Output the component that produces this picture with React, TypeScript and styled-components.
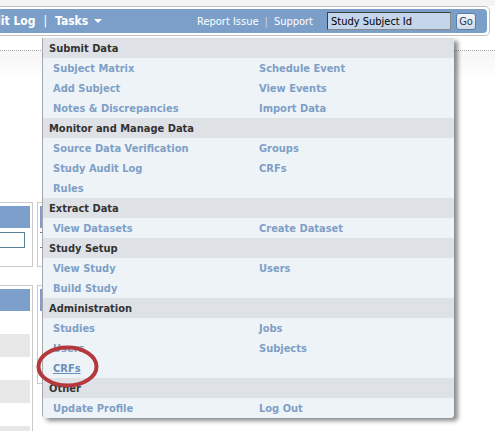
import React from 'react'
import styled, { createGlobalStyle } from 'styled-components'

const GlobalStyle = createGlobalStyle`
  html, body {
    margin: 0;
    padding: 0;
    background: #ffffff;
    overflow: hidden;
  }
  body {
    font-family: "DejaVu Sans Condensed", "DejaVu Sans", sans-serif;
    font-stretch: condensed;
  }
`

const Page = styled.div`
  position: relative;
  width: 495px;
  height: 431px;
  overflow: hidden;
`

const TopStrip = styled.div`
  height: 6px;
  background: #f3f3f3;
`

const NavFrame = styled.div`
  width: 487px;
  border: 1px solid #c2c2c2;
  border-left: none;
  border-radius: 0 5px 5px 0;
  padding: 2px 2px 2px 0;
  background: #ffffff;
`

const NavBar = styled.nav`
  display: flex;
  align-items: center;
  height: 24px;
  background: #7b9fc9;
  border-radius: 0 4px 4px 0;
  color: #ffffff;
  font-size: 12px;
`

const NavLeft = styled.div`
  display: flex;
  align-items: center;
  margin-left: -23px;
  font-weight: bold;
  white-space: nowrap;
`

const Sep = styled.span<{ $light?: boolean }>`
  margin: 0 ${p => (p.$light ? 6 : 8)}px;
  color: ${p => (p.$light ? '#c9d8ea' : '#ffffff')};
  font-weight: normal;
`

const Caret = styled.span`
  display: inline-block;
  margin-left: 6px;
  width: 0;
  height: 0;
  border-left: 4px solid transparent;
  border-right: 4px solid transparent;
  border-top: 4px solid #ffffff;
`

const NavRight = styled.div`
  display: flex;
  align-items: center;
  margin-left: auto;
  font-size: 11px;
  white-space: nowrap;
`

const SearchInput = styled.input`
  box-sizing: border-box;
  width: 124px;
  height: 18px;
  margin-left: 14px;
  padding: 0 3px;
  border: 1px solid #3f3f3f;
  border-right-color: #8a8a8a;
  border-bottom-color: #8a8a8a;
  background: #c3d5ea;
  color: #000000;
  font-family: inherit;
  font-stretch: condensed;
  font-size: 11px;
  outline: none;
`

const GoButton = styled.button`
  box-sizing: border-box;
  width: 20px;
  height: 17px;
  margin: 0 11px 0 5px;
  padding: 0;
  border: 1px solid #5b7ea8;
  border-radius: 3px;
  background: linear-gradient(#f3f6f9, #cfdae6);
  color: #1d3a62;
  font-family: inherit;
  font-stretch: condensed;
  font-size: 11px;
`

const SubHeader = styled.div`
  height: 14px;
  border-bottom: 1px dotted #a8a8a8;
`

const Band = styled.div`
  height: 24px;
  background: linear-gradient(#f6f6f6, #fdfdfd);
`

const Content = styled.div`
  display: flex;
  gap: 4px;
  padding-top: 127px;
`

const Column = styled.div<{ $width: number }>`
  display: flex;
  flex-direction: column;
  gap: 18px;
  flex: 0 0 ${p => p.$width}px;
`

const Panel = styled.section<{ $open?: boolean }>`
  box-sizing: border-box;
  border: 1px solid #cacaca;
  border-left: ${p => (p.$open ? 'none' : '1px solid #cacaca')};
  padding: 3px 2px 3px ${p => (p.$open ? 0 : 2)}px;
`

const PanelHead = styled.div`
  height: 22px;
  background: #7ca0cb;
`

const PanelInput = styled.div`
  width: 25px;
  height: 16px;
  margin: 4px 0 15px;
  box-sizing: border-box;
  border: 1px solid #5a8396;
  border-left: none;
`

const PanelRow = styled.div<{ $shade?: boolean }>`
  height: 23px;
  background: ${p => (p.$shade ? '#e7e7e7' : 'transparent')};
`

const Menu = styled.div`
  position: absolute;
  left: 42px;
  top: 38px;
  width: 411px;
  border-left: 1px solid #a7a7a7;
  border-radius: 0 0 4px 4px;
  overflow: hidden;
  box-shadow: 4px 3px 4px rgba(0, 0, 0, 0.45);
  font-size: 11px;
  font-weight: bold;
`

const MenuHead = styled.div`
  box-sizing: border-box;
  height: 20px;
  line-height: 20px;
  padding: 1px 0 0 6px;
  background: #dee2e6;
  color: #333333;
`

const MenuRow = styled.div`
  box-sizing: border-box;
  display: grid;
  grid-template-columns: 206px 1fr;
  height: 20px;
  line-height: 20px;
  padding: 1px 0 0 10px;
  background: #eef3f8;
`

const MenuLink = styled.a<{ $hover?: boolean }>`
  color: ${p => (p.$hover ? '#6a8ebd' : '#7f9fc6')};
  text-decoration: ${p => (p.$hover ? 'underline' : 'none')};
  white-space: nowrap;
`

const Mark = styled.svg`
  position: absolute;
  left: 36px;
  top: 345px;
  pointer-events: none;
`

const sections: { title: string; rows: [string, string][] }[] = [
  {
    title: 'Submit Data',
    rows: [
      ['Subject Matrix', 'Schedule Event'],
      ['Add Subject', 'View Events'],
      ['Notes & Discrepancies', 'Import Data'],
    ],
  },
  {
    title: 'Monitor and Manage Data',
    rows: [
      ['Source Data Verification', 'Groups'],
      ['Study Audit Log', 'CRFs'],
      ['Rules', ''],
    ],
  },
  { title: 'Extract Data', rows: [['View Datasets', 'Create Dataset']] },
  {
    title: 'Study Setup',
    rows: [
      ['View Study', 'Users'],
      ['Build Study', ''],
    ],
  },
  {
    title: 'Administration',
    rows: [
      ['Studies', 'Jobs'],
      ['Users', 'Subjects'],
      ['CRFs', ''],
    ],
  },
  { title: 'Other', rows: [['Update Profile', 'Log Out']] },
]

export default function App() {
  return (
    <Page>
      <GlobalStyle />
      <TopStrip />
      <NavFrame>
        <NavBar>
          <NavLeft>
            <span>Audit Log</span>
            <Sep>|</Sep>
            <span>Tasks</span>
            <Caret />
          </NavLeft>
          <NavRight>
            <span>Report Issue</span>
            <Sep $light>|</Sep>
            <span>Support</span>
            <SearchInput defaultValue="Study Subject Id" />
            <GoButton>Go</GoButton>
          </NavRight>
        </NavBar>
      </NavFrame>
      <SubHeader />
      <Band />
      <Content>
        <Column $width={33}>
          <Panel $open>
            <PanelHead />
            <PanelInput />
          </Panel>
          <Panel $open>
            <PanelHead />
            <PanelRow />
            <PanelRow $shade />
            <PanelRow />
            <PanelRow $shade />
            <PanelRow />
            <PanelRow $shade />
          </Panel>
        </Column>
        <Column $width={410}>
          <Panel>
            <PanelHead />
            <PanelInput />
          </Panel>
          <Panel>
            <PanelHead />
            <PanelRow />
            <PanelRow />
            <PanelRow />
          </Panel>
        </Column>
      </Content>
      <Menu>
        {sections.map(s => (
          <React.Fragment key={s.title}>
            <MenuHead>{s.title}</MenuHead>
            {s.rows.map(([a, b]) => (
              <MenuRow key={a}>
                <MenuLink href="#" $hover={s.title === 'Administration' && a === 'CRFs'}>
                  {a}
                </MenuLink>
                <MenuLink href="#">{b}</MenuLink>
              </MenuRow>
            ))}
          </React.Fragment>
        ))}
      </Menu>
      <Mark width="64" height="44" viewBox="0 0 64 44">
        <ellipse cx="31.5" cy="21.5" rx="29" ry="19" fill="none" stroke="#b5383c" strokeWidth="4" />
      </Mark>
    </Page>
  )
}
